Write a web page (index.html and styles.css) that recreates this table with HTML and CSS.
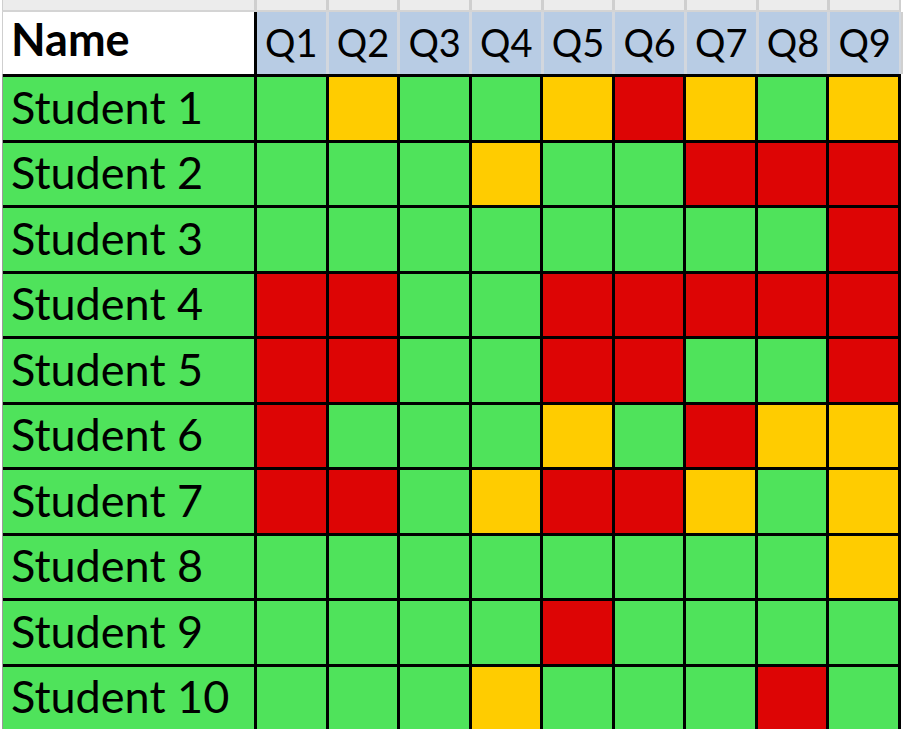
FILE: index.html
```html
<!DOCTYPE html>
<html>
<head>
<meta charset="utf-8">
<link rel="stylesheet" href="styles.css">
</head>
<body>
<div class="sheet">
  <div class="strip">
    <div></div><div></div><div></div><div></div><div></div><div></div><div></div><div></div><div></div><div></div>
  </div>
  <div class="header">
    <div class="name-h">Name</div>
    <div class="q">Q1</div><div class="q">Q2</div><div class="q">Q3</div><div class="q">Q4</div><div class="q">Q5</div><div class="q">Q6</div><div class="q">Q7</div><div class="q">Q8</div><div class="q">Q9</div>
  </div>
  <div class="body">
    <div class="name">Student 1</div><div class="g"></div><div class="y"></div><div class="g"></div><div class="g"></div><div class="y"></div><div class="r"></div><div class="y"></div><div class="g"></div><div class="y"></div>
    <div class="name">Student 2</div><div class="g"></div><div class="g"></div><div class="g"></div><div class="y"></div><div class="g"></div><div class="g"></div><div class="r"></div><div class="r"></div><div class="r"></div>
    <div class="name">Student 3</div><div class="g"></div><div class="g"></div><div class="g"></div><div class="g"></div><div class="g"></div><div class="g"></div><div class="g"></div><div class="g"></div><div class="r"></div>
    <div class="name">Student 4</div><div class="r"></div><div class="r"></div><div class="g"></div><div class="g"></div><div class="r"></div><div class="r"></div><div class="r"></div><div class="r"></div><div class="r"></div>
    <div class="name">Student 5</div><div class="r"></div><div class="r"></div><div class="g"></div><div class="g"></div><div class="r"></div><div class="r"></div><div class="g"></div><div class="g"></div><div class="r"></div>
    <div class="name">Student 6</div><div class="r"></div><div class="g"></div><div class="g"></div><div class="g"></div><div class="y"></div><div class="g"></div><div class="r"></div><div class="y"></div><div class="y"></div>
    <div class="name">Student 7</div><div class="r"></div><div class="r"></div><div class="g"></div><div class="y"></div><div class="r"></div><div class="r"></div><div class="y"></div><div class="g"></div><div class="y"></div>
    <div class="name">Student 8</div><div class="g"></div><div class="g"></div><div class="g"></div><div class="g"></div><div class="g"></div><div class="g"></div><div class="g"></div><div class="g"></div><div class="y"></div>
    <div class="name">Student 9</div><div class="g"></div><div class="g"></div><div class="g"></div><div class="g"></div><div class="r"></div><div class="g"></div><div class="g"></div><div class="g"></div><div class="g"></div>
    <div class="name">Student 10</div><div class="g"></div><div class="g"></div><div class="g"></div><div class="y"></div><div class="g"></div><div class="g"></div><div class="g"></div><div class="r"></div><div class="g"></div>
  </div>
</div>
</body>
</html>
```
FILE: styles.css
```css
html, body {
  margin: 0;
  padding: 0;
  background: #ffffff;
  overflow: hidden;
}
.sheet {
  width: 911px;
  height: 730px;
  overflow: hidden;
  padding-left: 2px;
  box-sizing: border-box;
  font-family: "Lato", "Liberation Sans", sans-serif;
  color: #000;
}
.strip {
  display: grid;
  grid-template-columns: 251px repeat(9, 1fr);
  column-gap: 3px;
  width: 899px;
  box-sizing: border-box;
  height: 12px;
  border-left: 1px solid #cfcfcf;
  border-right: 2px solid #cfcfcf;
  border-bottom: 2px solid #d4d4d4;
  background: #cfcfcf;
}
.strip div {
  background: #ececec;
}
.header {
  display: grid;
  grid-template-columns: 251px repeat(9, 1fr);
  column-gap: 3px;
  width: 901px;
  box-sizing: border-box;
  height: 62px;
  border-left: 1px solid #cfcfcf;
  border-right: 2px solid #d0d0d0;
  padding-right: 2px;
  background: #d2d7de;
}
.name-h {
  background: #ffffff;
  font-weight: 700;
  font-size: 45px;
  padding-left: 8px;
  padding-bottom: 8px;
  display: flex;
  align-items: center;
  box-shadow: 3px 0 0 #000;
}
.q {
  background: #b8cce4;
  font-size: 38px;
  padding-bottom: 3px;
  display: flex;
  align-items: center;
  justify-content: center;
}
.body {
  display: grid;
  grid-template-columns: 251px repeat(9, 1fr);
  grid-auto-rows: 62.5px;
  gap: 3px;
  width: 899px;
  box-sizing: border-box;
  border-left: 1px solid #9a9a9a;
  padding-top: 3px;
  padding-right: 3px;
  background: #000;
}
.name {
  background: #4fe35b;
  font-size: 45px;
  padding-left: 8px;
  padding-bottom: 3px;
  display: flex;
  align-items: center;
}
.g { background: #4fe35b; }
.y { background: #ffcc00; }
.r { background: #dd0505; }
```
